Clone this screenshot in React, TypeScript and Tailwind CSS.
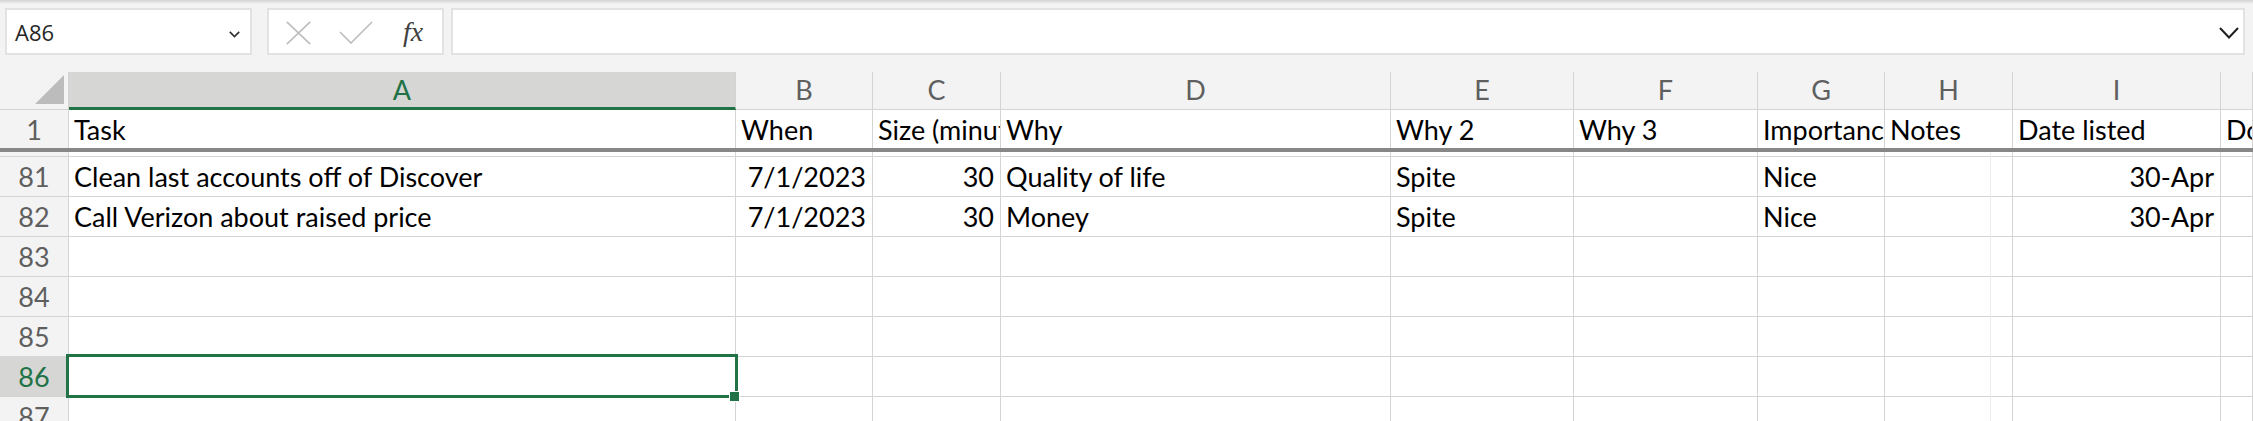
import React from "react";

const GRID =
  "grid grid-cols-[69px_667px_137px_128px_390px_183px_184px_127px_128px_208px_32px]";
const CELLFONT = "font-['Lato',sans-serif] text-[27px] leading-none";

const letters = ["A", "B", "C", "D", "E", "F", "G", "H", "I", "J"];

type Cell = { t?: string; r?: boolean };

const headerCells: Cell[] = [
  { t: "Task" },
  { t: "When" },
  { t: "Size (minutes)" },
  { t: "Why" },
  { t: "Why 2" },
  { t: "Why 3" },
  { t: "Importance" },
  { t: "Notes" },
  { t: "Date listed" },
  { t: "Done" },
];

const empty: Cell[] = [{}, {}, {}, {}, {}, {}, {}, {}, {}, {}];

const rows: { n: number; cells: Cell[] }[] = [
  {
    n: 81,
    cells: [
      { t: "Clean last accounts off of Discover" },
      { t: "7/1/2023", r: true },
      { t: "30", r: true },
      { t: "Quality of life" },
      { t: "Spite" },
      {},
      { t: "Nice" },
      {},
      { t: "30-Apr", r: true },
      {},
    ],
  },
  {
    n: 82,
    cells: [
      { t: "Call Verizon about raised price" },
      { t: "7/1/2023", r: true },
      { t: "30", r: true },
      { t: "Money" },
      { t: "Spite" },
      {},
      { t: "Nice" },
      {},
      { t: "30-Apr", r: true },
      {},
    ],
  },
  { n: 83, cells: empty },
  { n: 84, cells: empty },
  { n: 85, cells: empty },
  { n: 86, cells: empty },
  { n: 87, cells: empty },
];

export default function App() {
  return (
    <div className="relative h-[421px] w-[2253px] overflow-hidden bg-[#f3f3f3]">
      {/* top shadow */}
      <div className="h-[4px] bg-gradient-to-b from-[#d2d2d2] to-[#f3f3f3]" />
      {/* formula bar row */}
      <div className="flex h-[68px] items-start pl-[5px] pr-[8px] pt-[4px]">
        <div className="flex h-[47px] w-[247px] items-center justify-between border-2 border-[#e2e2e2] bg-white pl-[8px] pr-[10px]">
          <span className="font-['Open_Sans',sans-serif] text-[22px] leading-none text-[#262626]">
            A86
          </span>
          <svg width="11" height="7" viewBox="0 0 11 7" className="mt-[5px]">
            <polyline
              points="0.8,0.8 5.5,5.5 10.2,0.8"
              fill="none"
              stroke="#333"
              strokeWidth="1.7"
            />
          </svg>
        </div>
        <div className="ml-[15px] flex h-[47px] w-[177px] items-center border-2 border-[#e2e2e2] bg-white pl-[17px]">
          <svg width="25" height="24" viewBox="0 0 25 24" className="mt-[2px]">
            <line x1="0.8" y1="0.8" x2="24.2" y2="23.2" stroke="#bdbdbd" strokeWidth="1.6" />
            <line x1="24.2" y1="0.8" x2="0.8" y2="23.2" stroke="#bdbdbd" strokeWidth="1.6" />
          </svg>
          <svg width="34" height="23" viewBox="0 0 34 23" className="ml-[28px] mt-[1px]">
            <polyline
              points="1,11 12,22 33,1"
              fill="none"
              stroke="#bdbdbd"
              strokeWidth="1.6"
            />
          </svg>
          <span className="ml-[30px] font-['Liberation_Serif',serif] text-[28px] italic leading-none text-[#404040]">
            fx
          </span>
        </div>
        <div className="ml-[7px] flex h-[47px] flex-1 items-center justify-end border-2 border-[#e2e2e2] bg-white pr-[4px]">
          <svg width="20" height="12" viewBox="0 0 20 12" className="mt-[2px]">
            <polyline
              points="1,1 10,10.5 19,1"
              fill="none"
              stroke="#1f1f1f"
              strokeWidth="2"
            />
          </svg>
        </div>
      </div>

      {/* column header row */}
      <div className={`${GRID} h-[38px]`}>
        <div className="relative border-b border-r border-[#d4d4d4] bg-[#f3f3f3]">
          <svg width="69" height="38" viewBox="0 0 69 38" className="absolute left-0 top-0">
            <polygon points="64,3 64,32 35,32" fill="#bcbcbc" />
          </svg>
        </div>
        {letters.map((l) =>
          l === "A" ? (
            <div
              key={l}
              className={`flex items-end justify-center border-b-[3px] border-r border-b-[#217346] border-r-[#d4d4d4] bg-[#d6d6d5] pb-[4px] text-[#217346] ${CELLFONT}`}
            >
              {l}
            </div>
          ) : (
            <div
              key={l}
              className={`flex items-end justify-center border-b border-r border-[#d4d4d4] bg-[#f3f3f3] pb-[6px] text-[#5f5f5f] ${CELLFONT}`}
            >
              {l === "J" ? "" : l}
            </div>
          )
        )}
      </div>

      {/* row 1 */}
      <div className={`${GRID} h-[38px]`}>
        <div
          className={`flex items-end justify-center border-r border-[#d4d4d4] bg-[#f3f3f3] pb-[5px] text-[#5f5f5f] ${CELLFONT}`}
        >
          1
        </div>
        {headerCells.map((c, i) => (
          <div
            key={i}
            className={`flex items-end justify-start overflow-hidden whitespace-nowrap border-r border-[#d4d4d4] bg-white pb-[5px] pl-[5px] text-black ${CELLFONT}`}
          >
            {c.t ?? ""}
          </div>
        ))}
      </div>

      {/* freeze pane line */}
      <div className="h-[4px] bg-[#878787]" />

      {/* gap under freeze line */}
      <div className={`${GRID} h-[5px]`}>
        <div className="border-b border-r border-[#d4d4d4] bg-[#f3f3f3]" />
        {letters.map((l) => (
          <div key={l} className="border-b border-r border-[#d4d4d4] bg-white" />
        ))}
      </div>

      {/* data rows */}
      {rows.map((row) => (
        <div key={row.n} className={`${GRID} h-[40px]`}>
          <div
            className={`flex items-end justify-center border-b border-r border-[#d4d4d4] pb-[6px] ${CELLFONT} ${
              row.n === 86 ? "bg-[#d6d6d5] text-[#217346]" : "bg-[#f3f3f3] text-[#5f5f5f]"
            }`}
          >
            {row.n}
          </div>
          {row.cells.map((c, i) => (
            <div
              key={i}
              className={`flex items-end overflow-hidden whitespace-nowrap border-b border-r border-[#d4d4d4] bg-white pb-[6px] text-black ${CELLFONT} ${
                c.r ? "justify-end pr-[6px]" : "justify-start pl-[5px]"
              }`}
            >
              {c.t ?? ""}
            </div>
          ))}
        </div>
      ))}

      {/* faint page break line */}
      <div className="absolute left-[1990px] top-[152px] h-[269px] w-px bg-[#ececec]" />

      {/* selection box */}
      <div className="absolute left-[66px] top-[354px] h-[44px] w-[672px] border-[3px] border-[#217346]" />
      {/* fill handle */}
      <div className="absolute left-[729px] top-[391px] h-[11px] w-[11px] border border-white bg-[#217346]" />
    </div>
  );
}
